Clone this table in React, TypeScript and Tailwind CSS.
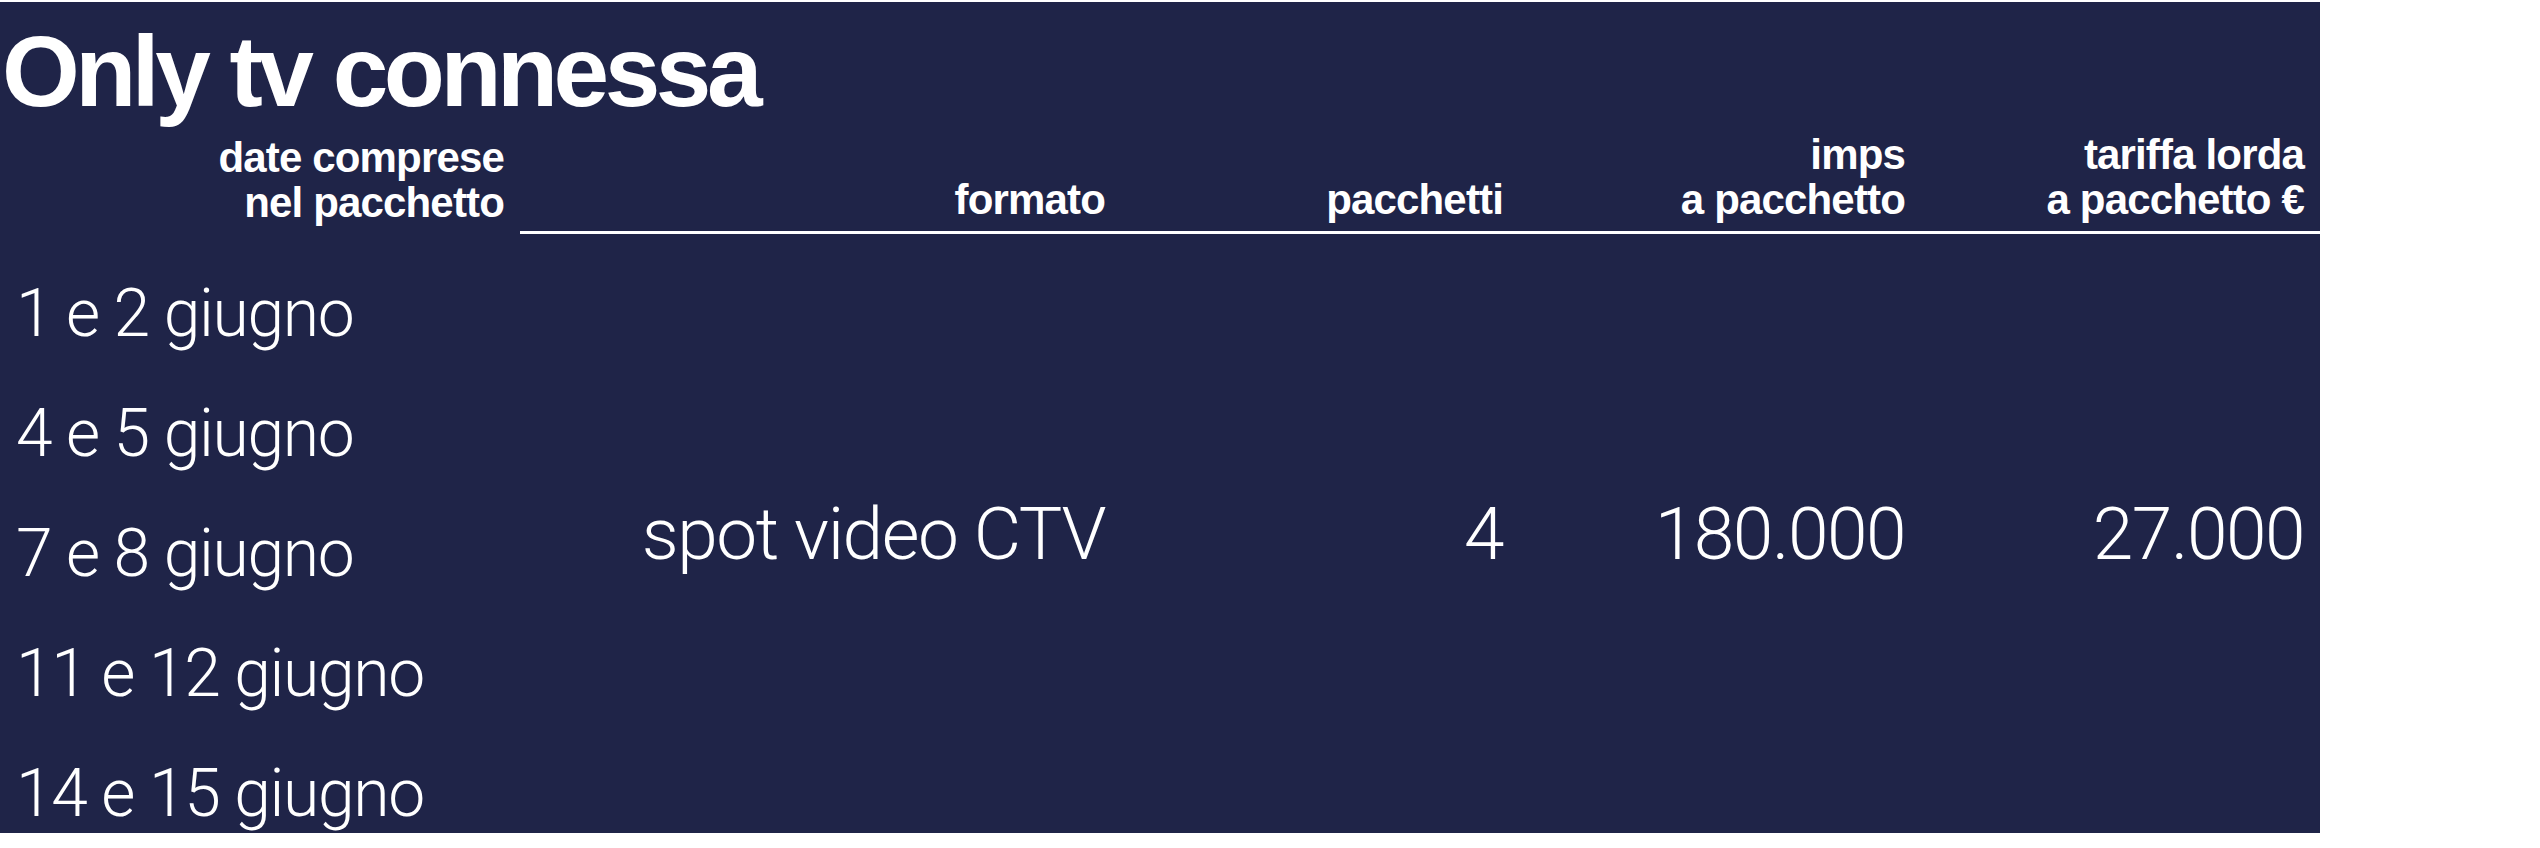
const dates = ["1 e 2 giugno", "4 e 5 giugno", "7 e 8 giugno", "11 e 12 giugno", "14 e 15 giugno"];

const headers = [
  { lines: ["formato"] },
  { lines: ["pacchetti"] },
  { lines: ["imps", "a pacchetto"] },
  { lines: ["tariffa lorda", "a pacchetto €"] },
];

const values = ["spot video CTV", "4", "180.000", "27.000"];

const bold = "font-['Liberation_Sans',Arial,sans-serif] font-bold";
const light = "font-['Roboto','Liberation_Sans',sans-serif] font-light";

export default function App() {
  return (
    <div className="min-h-[848px] w-[2540px] bg-white pt-[2px]">
      <div className="flex h-[831px] w-[2320px] flex-col overflow-hidden bg-[#1f2448] text-white">
        {/* Title */}
        <h1 className={`${bold} pl-[2px] pt-[19px] text-[100px] leading-[100px] tracking-[-0.045em]`}>
          Only tv connessa
        </h1>

        {/* Header row */}
        <div className="mt-[11px] grid grid-cols-[520px_601px_398px_402px_399px]">
          <div className={`${bold} flex flex-col justify-end pb-[9px] pr-4 text-right text-[42px] leading-[45px] tracking-[-0.02em]`}>
            <span>date comprese</span>
            <span>nel pacchetto</span>
          </div>
          {headers.map((h) => (
            <div
              key={h.lines.join()}
              className={`${bold} flex flex-col justify-end border-b-[3px] border-white pb-[9px] pr-4 text-right text-[42px] leading-[45px] tracking-[-0.02em]`}
            >
              {h.lines.map((l) => (
                <span key={l}>{l}</span>
              ))}
            </div>
          ))}
        </div>

        {/* Body */}
        <div className="grid flex-1 grid-cols-[520px_601px_398px_402px_399px]">
          <div className={`${light} flex flex-col gap-[54px] pl-4 pt-[47px] text-[66px] leading-[66px] tracking-[-0.02em]`}>
            {dates.map((d) => (
              <div key={d}>{d}</div>
            ))}
          </div>
          {values.map((v) => (
            <div
              key={v}
              className={`${light} flex items-center justify-end pr-4 pt-[1px] text-[73px] leading-[73px] tracking-[-0.02em]`}
            >
              {v}
            </div>
          ))}
        </div>
      </div>
    </div>
  );
}
